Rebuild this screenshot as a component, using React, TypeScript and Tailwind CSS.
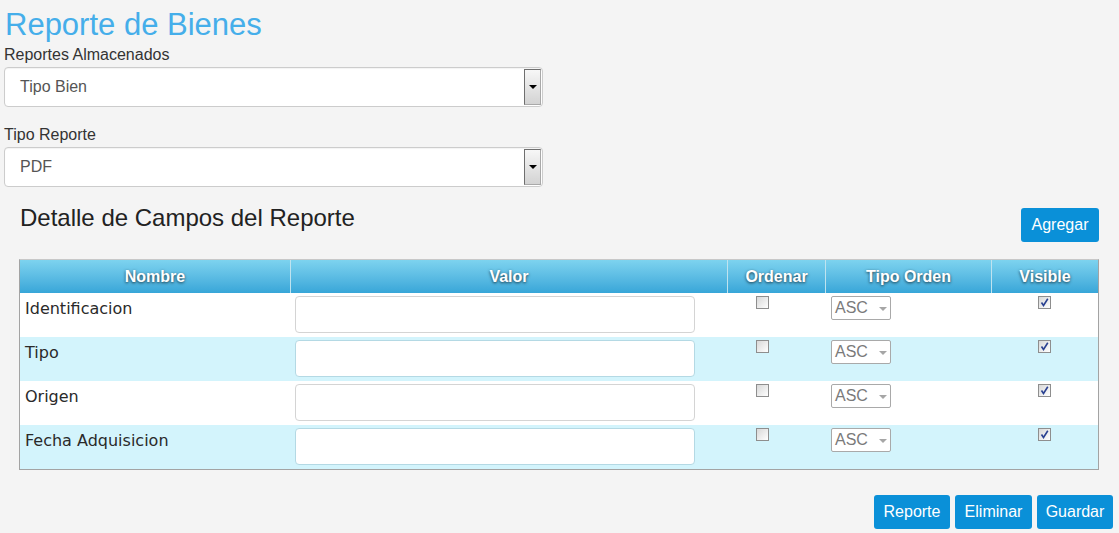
import React from 'react';

const FIELDS = ['Identificacion', 'Tipo', 'Origen', 'Fecha Adquisicion'];

const COLS = 'grid grid-cols-[270px_437px_98px_166px_1fr]';

const SelectBox: React.FC<{ value: string }> = ({ value }) => (
  <div className="h-[40px] w-[539px] bg-white border border-[#cccccc] rounded-[4px] shadow-[inset_0_1px_1px_rgba(0,0,0,0.05)] flex items-stretch">
    <div className="flex-1 flex items-center pl-[15px] text-[16px] text-[#555555]">{value}</div>
    <div className="my-[1px] mr-[1px] w-[17px] border border-[#6f6f6f] border-r-[#a8a8a8] border-b-[#a8a8a8] bg-gradient-to-b from-[#f7f7f7] to-[#d3d3d3] flex items-center justify-center">
      <div className="w-0 h-0 border-l-[4px] border-r-[4px] border-t-[4px] border-l-transparent border-r-transparent border-t-black" />
    </div>
  </div>
);

const Checkbox: React.FC<{ checked?: boolean }> = ({ checked }) => (
  <div className="w-[13px] h-[13px] border border-[#8e8e8e] bg-gradient-to-br from-[#d8d8d8] to-[#ffffff] relative">
    {checked && (
      <svg viewBox="0 0 11 11" className="absolute inset-0 w-[11px] h-[11px]">
        <path d="M2.5 5.5 L4.5 8.5 L8.8 1.8" fill="none" stroke="#2a4191" strokeWidth="1.6" />
      </svg>
    )}
  </div>
);

const OrderSelect: React.FC = () => (
  <div className="w-[60px] h-[24px] bg-white border border-[#a9a9a9] rounded-[2px] flex items-center justify-between pl-[3px] pr-[3px] text-[16px] text-[#7a7a7a]">
    <span>ASC</span>
    <div className="w-0 h-0 mt-[1px] border-l-[4px] border-r-[4px] border-t-[4px] border-l-transparent border-r-transparent border-t-[#a6a6a6]" />
  </div>
);

const Button: React.FC<{ label: string; width: string }> = ({ label, width }) => (
  <button className={`h-[34px] ${width} bg-[#0a90d8] text-white text-[16px] rounded-[3px] leading-none`}>
    {label}
  </button>
);

export default function App() {
  return (
    <div
      className="min-h-screen w-full bg-[#f4f4f4] pl-[4px] pr-[6px] text-[#333333]"
      style={{ fontFamily: '"Liberation Sans", Arial, sans-serif' }}
    >
      <h1 className="pt-[7px] pl-[1px] text-[31px] leading-[36px] text-[#45aeea]">Reporte de Bienes</h1>

      <div className="mt-[2px] text-[16px] leading-[20px]">Reportes Almacenados</div>
      <div className="mt-[2px]">
        <SelectBox value="Tipo Bien" />
      </div>

      <div className="mt-[18px] text-[16px] leading-[20px]">Tipo Reporte</div>
      <div className="mt-[2px]">
        <SelectBox value="PDF" />
      </div>

      <div className="pl-[15px] pr-[14px] pt-[17px]">
        <div className="flex items-start justify-between">
          <h2 className="pl-[1px] text-[24px] leading-[28px] text-[#222222]">Detalle de Campos del Reporte</h2>
          <div className="mt-[4px]">
            <Button label="Agregar" width="w-[78px]" />
          </div>
        </div>

        <div className="mt-[17px] border border-[#a3a3a3] border-t-[#c8c8c8]">
          <div
            className={`${COLS} h-[33px] bg-gradient-to-b from-[#7dd3ef] to-[#37a6d8] text-white font-bold text-[16px] [text-shadow:0_1px_3px_rgba(0,0,0,0.7)]`}
          >
            {['Nombre', 'Valor', 'Ordenar', 'Tipo Orden', 'Visible'].map((h, i) => (
              <div
                key={h}
                className={`flex items-center justify-center ${i > 0 ? 'border-l border-[#bfe3ef]' : ''}`}
              >
                {h}
              </div>
            ))}
          </div>

          {FIELDS.map((f, i) => {
            const blue = i % 2 === 1;
            return (
              <div key={f} className={`${COLS} h-[44px] ${blue ? 'bg-[#d3f4fc]' : 'bg-white'}`}>
                <div
                  className="pl-[5px] pt-[6px] text-[16px] leading-[20px] text-[#2a2a2a]"
                  style={{ fontFamily: '"DejaVu Sans", Verdana, sans-serif' }}
                >
                  {f}
                </div>
                <div className="pl-[5px] pt-[3px]">
                  <div
                    className={`w-[400px] h-[37px] bg-white rounded-[4px] border ${
                      blue ? 'border-[#b4d9e4]' : 'border-[#d4d4d4]'
                    }`}
                  />
                </div>
                <div className="pl-[29px] pt-[3px]">
                  <Checkbox />
                </div>
                <div className="pl-[6px] pt-[3px]">
                  <OrderSelect />
                </div>
                <div className="flex justify-center pt-[3px]">
                  <Checkbox checked />
                </div>
              </div>
            );
          })}
        </div>
      </div>

      <div className="mt-[25px] flex justify-end gap-[5px] pb-[5px]">
        <Button label="Reporte" width="w-[76px]" />
        <Button label="Eliminar" width="w-[77px]" />
        <Button label="Guardar" width="w-[76px]" />
      </div>
    </div>
  );
}
